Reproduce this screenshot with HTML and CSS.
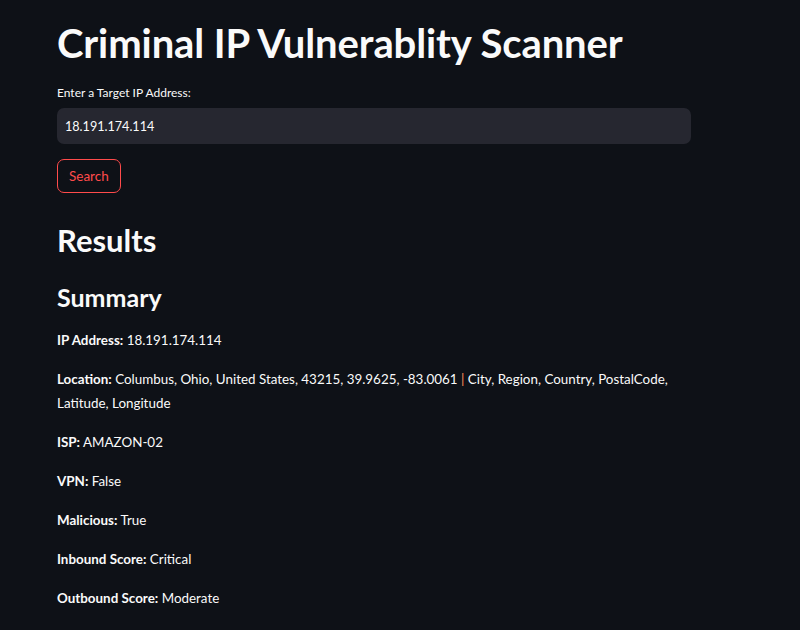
FILE: index.html
```html
<!DOCTYPE html>
<html>
<head>
<meta charset="utf-8">
<link rel="stylesheet" href="styles.css">
</head>
<body>
<main class="main">
  <h1 class="title">Criminal IP Vulnerablity Scanner</h1>
  <label class="label" for="ip">Enter a Target IP Address:</label>
  <div class="input-box"><input id="ip" class="input" type="text" value="18.191.174.114"></div>
  <button class="btn">Search</button>
  <h2 class="h2">Results</h2>
  <h3 class="h3">Summary</h3>
  <p class="row"><b>IP Address:</b> 18.191.174.114</p>
  <p class="row"><b>Location:</b> Columbus, Ohio, United States, 43215, 39.9625, -83.0061 <span class="pipe">|</span> City, Region, Country, PostalCode, Latitude, Longitude</p>
  <p class="row"><b>ISP:</b> AMAZON-02</p>
  <p class="row"><b>VPN:</b> False</p>
  <p class="row"><b>Malicious:</b> True</p>
  <p class="row"><b>Inbound Score:</b> Critical</p>
  <p class="row"><b>Outbound Score:</b> Moderate</p>
</main>
</body>
</html>
```
FILE: styles.css
```css
html, body {
  margin: 0;
  padding: 0;
  background: #0e1117;
  color: #fafafa;
  font-family: "Lato", "Noto Sans", sans-serif;
}
.main {
  width: 634px;
  padding: 17px 0 0 57px;
}
.title {
  font-size: 40px;
  font-weight: 700;
  margin: 0;
  line-height: 52px;
  white-space: nowrap;
  letter-spacing: -0.1px;
}
.label {
  display: block;
  font-size: 12px;
  margin-top: 16px;
  line-height: 16px;
}
.input-box {
  margin-top: 7px;
  height: 36px;
  background: #262730;
  border-radius: 7px;
  display: flex;
  align-items: center;
}
.input {
  background: transparent;
  border: none;
  outline: none;
  color: #fafafa;
  font-family: inherit;
  font-size: 12.6px;
  padding: 0 8px;
  width: 100%;
}
.btn {
  display: block;
  margin-top: 15px;
  height: 34px;
  padding: 0 11px;
  background: #0e1117;
  border: 1px solid #ff4b4b;
  border-radius: 7px;
  color: #ff4b4b;
  font-family: inherit;
  font-size: 13.5px;
}
.h2 {
  font-size: 31px;
  font-weight: 700;
  margin: 27px 0 0;
  line-height: 40px;
}
.h3 {
  font-size: 25px;
  font-weight: 700;
  margin: 20px 0 0;
  line-height: 34px;
}
.row {
  font-size: 13.4px;
  line-height: 24px;
  margin: 14px 0 0;
}
.row + .row { margin-top: 15px; }
.row b { font-weight: 700; }
.pipe { color: #ff8c5a; }
```
